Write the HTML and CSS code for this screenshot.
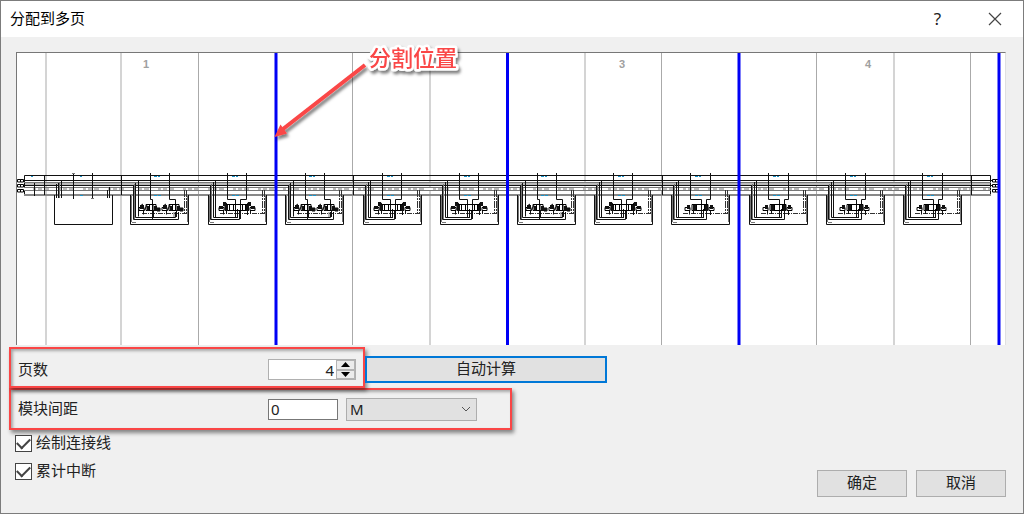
FILE: index.html
```html
<!DOCTYPE html>
<html lang="zh-CN">
<head>
  <meta charset="UTF-8">
  <title>分配到多页</title>
  <link rel="stylesheet" href="styles.css">
</head>
<body>

<div class="dialog">

  <!--标题栏-->
  <header class="titlebar">
    <h1>分配到多页</h1>
    <button type="button" class="help" aria-label="帮助">?</button>
    <button type="button" class="close" aria-label="关闭">
      <svg width="14" height="14" viewBox="0 0 14 14"><path d="M1 1L13 13M13 1L1 13" fill="none" stroke="#444" stroke-width="1.2"/></svg>
    </button>
  </header>

  <!--预览图-->
  <div class="preview">
    <svg class="drawing" viewBox="17 53 988 292">
      <defs>
        <!--模块外框和嵌套管线-->
        <g id="frame">
          <path class="ln" d="M.5 35V64.500H58.500V35"/>
          <path class="gy" d="M1.500 36V62M57.500 36V62"/>
          <path class="dash" d="M54.500 30V53M56.500 30V54"/>
          <path class="ret" d="M12 53.500H56"/>
          <path class="cy" d="M24 16.500H30M24 35.500H31"/>
          <path class="gy" d="M2 62.500H6"/>
        </g>
        <!--单个阀-->
        <g id="valve">
          <path class="vl" d="M0 47.500H5V50.500H0ZM7 44.500H17V50.500H7ZM10.500 44V51M14 44V51M18 48H21V51H18ZM1 46L4 44M5 51L8 45"/>
          <path class="vf" d="M1 45h4v4h-4zM8 46h2v5h-2zM15 46h3v5h-3zM18 48h3v3h-3z"/>
          <path class="ln" d="M4.500 51V54.500M14.500 50V57"/>
        </g>
        <!--双阀模块-->
        <g id="modA">
          <use href="#frame"/>
          <path class="gy" d="M4.500 24V59M44 52V57"/>
          <path class="ln" d="M3.500 25V59.500H48.500V52M5.500 23V57.500H45.500V52M8.500 20.500V56.500"/>
          <path class="ln" d="M20.500 13V39.500H22.500V59M39.500 13V39.500H45.500V50"/>
          <use href="#valve" x="9"/>
          <use href="#valve" x="32"/>
        </g>
        <!--宽阀模块-->
        <g id="modB">
          <use href="#frame"/>
          <path class="gy" d="M3.500 24V59"/>
          <path class="ln" d="M2.500 25V59.500H31.500V50M5.500 22V57.500H29M7.500 20.500V57.500H27.500"/>
          <path class="ln" d="M19.500 13V39.500H27.500V57M38.500 13V39.500H32.500V59M29.500 49V58"/>
          <path class="vl" d="M11 47.500H16V50.500H11ZM17 44.500H40V50.500H17ZM42 47.500H47V50.500H42ZM21.500 45V51M25.500 45V51M34.500 45V51M37.500 45V51M15 46L19 43M39 43L43 46"/>
          <path class="vf" d="M15 42h3v4h-3zM17 45h3v6h-3zM38 45h3v6h-3zM40 42h3v4h-3zM11 46h4v3h-4zM43 46h4v3h-4z"/>
          <path class="ln" d="M15.500 51V54.500M18.500 51V54M39.500 51V55M42.500 51V54"/>
        </g>
        <!--窄阀模块-->
        <g id="modC">
          <use href="#frame"/>
          <path class="gy" d="M3.500 24V59"/>
          <path class="ln" d="M2.500 25V59.500H35.500V50M5.500 22V57.500H32M7.500 20.500V57.500H30.500"/>
          <path class="ln" d="M19.500 13V39.500H30.500V57M39.500 13V39.500H35.500V44M32.500 49V58"/>
          <path class="vl" d="M14 47.500H19V50.500H14ZM21 44.500H37V50.500H21ZM38 47.500H43V50.500H38ZM25.500 45V51M33.500 45V51"/>
          <path class="vf" d="M16 45h3v4h-3zM22 45h3v6h-3zM34 45h3v6h-3zM39 45h3v4h-3z"/>
          <path class="ln" d="M18.500 51V54.500M22.500 51V54M35.500 51V54M39.500 51V55"/>
        </g>
        <!--端子-->
        <g id="port">
          <path class="vl" d="M.5 .5H3.500V3H.5ZM3.500 .5H6.500V3H3.500Z"/>
        </g>
        <filter id="shadow" x="-20%" y="-20%" width="150%" height="160%">
          <feDropShadow dx="2" dy="3" stdDeviation="1.500" flood-color="#000" flood-opacity=".5"/>
        </filter>
      </defs>

      <!--分段线-->
      <path class="seg-light" d="M46 53V345M121 53V345M430 53V345M585 53V345M894 53V345"/>
      <path class="seg" d="M198.500 53V345M352.500 53V345M661.500 53V345M816.500 53V345M970.500 53V345"/>

      <!--总线-->
      <path class="bus-band" d="M24 183.500H991M24 189H991"/>
      <path class="ln" d="M24.500 175.500H990.500V195M24.500 175.500V195M24 180.500H992M24 185.500H992"/>
      <path class="gy" d="M24 182.500H991M24 187.500H991M24 190.500H991"/>
      <path class="bus" d="M24 195H991"/>
      <path class="bus-dash" d="M24 189H991"/>
      <path class="ln" d="M44.500 175V195M121.500 175V195M353.500 175V195M662.500 175V195M971.500 175V195M34.500 183V196"/>

      <!--第一个模块-->
      <path class="ln" d="M54.500 195V224.500H112.500V195M56.500 184V198M58.500 183V198M61.500 180V198M73.500 173V199M92.500 173V199M107.500 190V198M109.500 187V198"/>
      <path class="gy" d="M59.500 183V198M72 173.500H75M91 198.500H94"/>
      <path class="cy" d="M31 176.500H33M80 176.500H82M80 195.500H83"/>

      <use href="#modA" x="130" y="160"/>
      <use href="#modB" x="208" y="160"/>
      <use href="#modA" x="285" y="160"/>
      <use href="#modB" x="363" y="160"/>
      <use href="#modB" x="440" y="160"/>
      <use href="#modA" x="517" y="160"/>
      <use href="#modB" x="594" y="160"/>
      <use href="#modC" x="671" y="160"/>
      <use href="#modC" x="749" y="160"/>
      <use href="#modC" x="826" y="160"/>
      <use href="#modC" x="903" y="160"/>

      <use href="#port" x="17" y="179"/>
      <use href="#port" x="17" y="184"/>
      <use href="#port" x="17" y="189"/>
      <use href="#port" x="992" y="179"/>
      <use href="#port" x="992" y="184"/>
      <use href="#port" x="992" y="189"/>

      <!--分割线-->
      <path class="split" d="M276 53V345M507.500 53V345M739 53V345M999 53V345"/>

      <g class="page">
        <text x="146" y="68">1</text>
        <text x="622" y="68">3</text>
        <text x="868" y="68">4</text>
      </g>

      <!--标注-->
      <g filter="url(#shadow)">
        <path d="M365 65L283 129" stroke="#fa4646" stroke-width="4"/>
        <path d="M274.500 137L280.500 124.500L287 133.500Z" fill="#fa4646"/>
      </g>
      <text class="note" x="369" y="66" filter="url(#shadow)">分割位置</text>
    </svg>
  </div>

  <!--参数-->
  <form class="params">
    <div class="line">
      <div class="mark mark-pages">
        <label for="pages">页数</label>
        <div class="spin">
          <input type="text" id="pages" value="4">
          <div class="steps">
            <button type="button" aria-label="增加"><svg width="9" height="5" viewBox="0 0 9 5"><path d="M0 5L4.500 0L9 5Z"/></svg></button>
            <button type="button" aria-label="减少"><svg width="9" height="5" viewBox="0 0 9 5"><path d="M0 0L4.500 5L9 0Z"/></svg></button>
          </div>
        </div>
      </div>
      <button type="button" class="btn auto">自动计算</button>
    </div>

    <div class="mark mark-gap">
      <label for="gap">模块间距</label>
      <input type="text" id="gap" class="gap" value="0">
      <div class="unit">
        <select aria-label="单位">
          <option>M</option>
        </select>
        <svg width="10" height="6" viewBox="0 0 10 6"><path d="M1 1L5 5L9 1" fill="none" stroke="#555"/></svg>
      </div>
    </div>

    <!--选项和底部按钮-->
    <div class="bottom">
      <div class="options">
        <label class="check"><input type="checkbox" checked><span>绘制连接线</span></label>
        <label class="check"><input type="checkbox" checked><span>累计中断</span></label>
      </div>
      <div class="actions">
        <button type="button" class="btn">确定</button>
        <button type="button" class="btn">取消</button>
      </div>
    </div>
  </form>
</div>

</body>
</html>
```
FILE: styles.css
```css
* {
  margin: 0;
  padding: 0;
  box-sizing: border-box;
}

body,
input,
select,
button {
  font-family: "Noto Sans", "Noto Sans CJK SC", sans-serif;
  font-size: 15px;
  line-height: 20px;
  color: #222;
}

.dialog {
  min-height: 100vh;
  display: flex;
  flex-direction: column;
  background-color: #f0f0f0;
  border: 1px solid #7c7c7c;
}

/*标题栏*/
.titlebar {
  display: flex;
  align-items: center;
  height: 36px;
  padding-left: 9px;
  background-color: #fff;
}

.titlebar h1 {
  flex: 1;
  padding-bottom: 2px;
  font-size: 15px;
  font-weight: normal;
  color: #000;
}

.titlebar button {
  width: 57px;
  height: 34px;
  border: 0;
  background: none;
  font-size: 17px;
}

.close svg {
  display: block;
  margin: 0 auto;
}

/*预览图*/
.preview {
  margin: 15px 17px 0 15px;
  background-color: #fff;
  border-top: 1px solid #777;
  border-left: 1px solid #777;
  border-right: 1px solid #e0e0e0;
}

.drawing {
  display: block;
  width: 100%;
  overflow: visible;
}

.ln {
  fill: none;
  stroke: #111;
}

.gy {
  fill: none;
  stroke: #777;
}

.bus {
  stroke: #888;
  stroke-width: 2;
}

.bus-band {
  stroke: #bbb;
  stroke-width: 3;
}

.bus-dash {
  stroke: #fff;
  stroke-width: 2;
  stroke-dasharray: 9 3 2 4 2 5;
}

.dash {
  fill: none;
  stroke: #333;
  stroke-dasharray: 7 1 2 1;
}

.ret {
  fill: none;
  stroke: #333;
  stroke-dasharray: 5 1 1 1;
}

.cy {
  stroke: #1b96cc;
  stroke-dasharray: 3 1;
}

.vl {
  fill: none;
  stroke: #000;
}

.vf {
  fill: #111;
}

.seg {
  stroke: #aaa;
}

.seg-light {
  stroke: #d4d4d4;
  stroke-width: 2;
}

.split {
  stroke: #0000f5;
  stroke-width: 3;
}

.page {
  fill: #a0a0a0;
  font-family: "Liberation Sans", sans-serif;
  font-size: 11px;
  font-weight: bold;
  text-anchor: middle;
}

.note {
  fill: #fa4646;
  stroke: #fff;
  stroke-width: 5px;
  stroke-linejoin: round;
  paint-order: stroke;
  font-family: "Noto Sans CJK SC", sans-serif;
  font-size: 22px;
  font-weight: 500;
}

/*参数*/
.params {
  padding: 2px 8px 0;
}

.line {
  display: flex;
  align-items: flex-end;
}

.mark {
  display: flex;
  align-items: center;
  border: 2px solid #fa4646;
  box-shadow: 2px 3px 4px rgba(0, 0, 0, .45), inset 2px 2px 3px rgba(0, 0, 0, .3);
  padding-left: 7px;
}

.mark label {
  width: 250px;
}

.mark-pages {
  width: 356px;
  height: 41px;
  padding-top: 4px;
}

.mark-gap {
  width: 503px;
  height: 42px;
}

.mark label {
  padding-bottom: 2px;
}

.spin {
  display: flex;
  width: 88px;
  height: 21px;
  background-color: #fff;
  border: 1px solid #b0b0b0;
}

.spin input {
  flex: 1;
  min-width: 0;
  border: 0;
  background: none;
  text-align: right;
  padding-right: 2px;
}

.steps {
  display: flex;
  flex-direction: column;
  width: 19px;
}

.steps button {
  flex: 1;
  min-height: 0;
  display: flex;
  align-items: center;
  justify-content: center;
  background-color: #ececec;
  border: 1px solid #b4b4b4;
}

.gap {
  width: 70px;
  height: 21px;
  padding-left: 2px;
  border: 1px solid #777;
  background-color: #fff;
}

.unit {
  display: grid;
  align-items: center;
  width: 131px;
  height: 23px;
  margin-left: 8px;
}

.unit select,
.unit svg {
  grid-area: 1 / 1;
}

.unit select {
  width: 100%;
  height: 23px;
  padding-left: 3px;
  appearance: none;
  background-color: #e1e1e1;
  border: 1px solid #adadad;
  border-radius: 0;
}

.unit svg {
  justify-self: end;
  margin-right: 6px;
  pointer-events: none;
}

.btn {
  width: 90px;
  height: 27px;
  padding-bottom: 4px;
  background-color: #e1e1e1;
  border: 1px solid #adadad;
}

.auto {
  width: 242px;
  margin-bottom: 5px;
  border: 2px solid #0078d7;
}

/*选项和底部按钮*/
.bottom {
  display: flex;
  justify-content: space-between;
  align-items: flex-start;
  padding: 0 9px 0 6px;
}

.check {
  display: flex;
  align-items: center;
  gap: 4px;
  height: 29px;
}

.check:first-child {
  height: 27px;
}

.check span {
  padding-bottom: 4px;
}

.check input {
  appearance: none;
  width: 17px;
  height: 17px;
  border: 1px solid #444;
  background-color: #fff;
  display: grid;
  place-items: center;
}

/*勾*/
.check input:checked::before {
  content: "";
  width: 11px;
  height: 6px;
  border-left: 2px solid #444;
  border-bottom: 2px solid #444;
  transform: translateY(-2px) rotate(-45deg);
}

.actions {
  display: flex;
  gap: 9px;
  margin-top: 40px;
}
```
